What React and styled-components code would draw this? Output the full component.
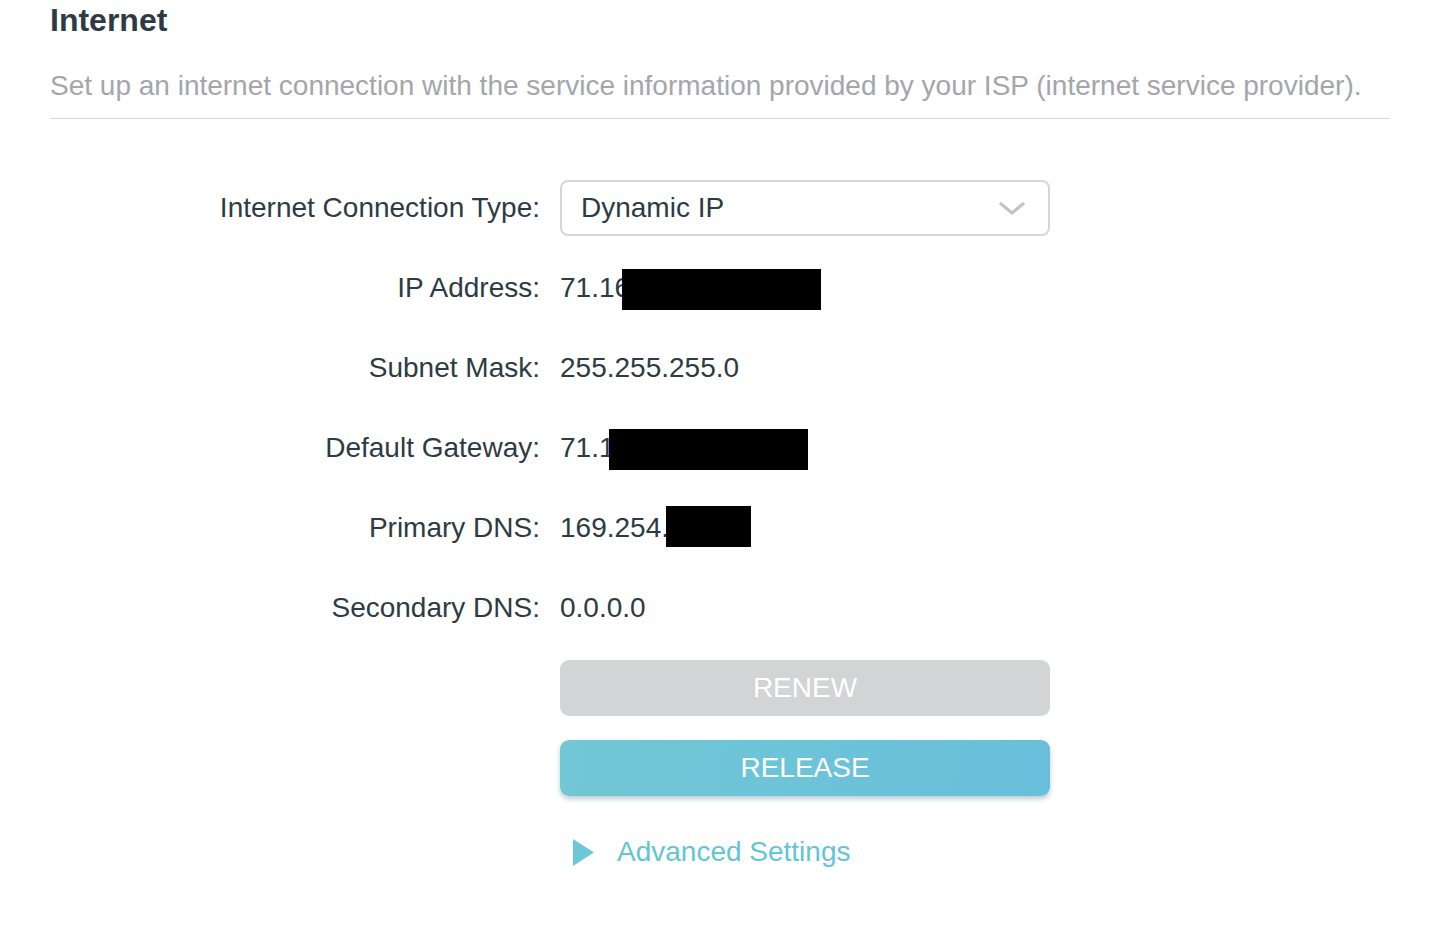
import React from "react";
import styled, { createGlobalStyle } from "styled-components";

const Global = createGlobalStyle`
  html, body { margin: 0; padding: 0; background: #ffffff; }
  body { font-family: "Liberation Sans", Arial, Helvetica, sans-serif; }
`;

const Page = styled.div`
  padding: 0 50px;
  width: 1440px;
  box-sizing: border-box;
`;

const Title = styled.h1`
  margin: 0;
  font-size: 32px;
  line-height: 40px;
  font-weight: 700;
  color: #2e3b43;
`;

const Desc = styled.p`
  margin: 25px 0 0;
  padding-bottom: 11px;
  font-size: 28px;
  line-height: 42px;
  color: #a3a6aa;
  border-bottom: 1px solid #d9d9d9;
`;

const Form = styled.div`
  margin-top: 49px;
  display: grid;
  grid-template-columns: 490px 490px;
  column-gap: 20px;
  grid-auto-rows: 80px;
`;

const Label = styled.div`
  display: flex;
  align-items: center;
  justify-content: flex-end;
  font-size: 28px;
  color: #2e3b43;
  white-space: nowrap;
`;

const Value = styled.div`
  display: flex;
  align-items: center;
  font-size: 28px;
  color: #2e3b43;
`;

const Redact = styled.span`
  display: inline-block;
  background: #000;
  height: ${(p) => p.$h}px;
  width: ${(p) => p.$w}px;
  margin-left: ${(p) => p.$ml}px;
  margin-top: ${(p) => p.$mt || 0}px;
`;

const Select = styled.div`
  box-sizing: border-box;
  width: 490px;
  height: 56px;
  margin-top: -1px;
  border: 2px solid #d6d6d6;
  border-radius: 8px;
  display: flex;
  align-items: center;
  justify-content: space-between;
  padding: 0 22px 0 19px;
  font-size: 28px;
  color: #2e3b43;
`;

const Actions = styled.div`
  margin-left: 510px;
  margin-top: 12px;
  display: flex;
  flex-direction: column;
  gap: 24px;
  width: 490px;
`;

const Button = styled.button`
  width: 490px;
  height: 56px;
  border: none;
  border-radius: 9px;
  font-family: "Liberation Sans", Arial, sans-serif;
  font-size: 28px;
  color: #ffffff;
  padding: 0;
  background: ${(p) =>
    p.$primary ? "linear-gradient(100deg, #72c7d5 0%, #68bfdb 100%)" : "#d3d4d6"};
  box-shadow: ${(p) => (p.$primary ? "0 3px 5px rgba(60, 110, 130, 0.35)" : "none")};
`;

const Advanced = styled.div`
  margin: 16px 0 0 13px;
  display: flex;
  align-items: center;
  gap: 23px;
  font-size: 28px;
  color: #63c5d6;
`;

const Chevron = () => (
  <svg width="28" height="16" viewBox="0 0 28 16">
    <path d="M2 3 L14 13 L26 3" fill="none" stroke="#c4c4c4" strokeWidth="3.2" />
  </svg>
);

const Triangle = () => (
  <svg width="21" height="27" viewBox="0 0 21 27">
    <path d="M0 0 L21 13.5 L0 27 Z" fill="#6cc7d6" />
  </svg>
);

export default function App() {
  return (
    <Page>
      <Global />
      <Title>Internet</Title>
      <Desc>
        Set up an internet connection with the service information provided by your ISP (internet service provider).
      </Desc>
      <Form>
        <Label>Internet Connection Type:</Label>
        <Value>
          <Select>
            <span>Dynamic IP</span>
            <Chevron />
          </Select>
        </Value>
        <Label>IP Address:</Label>
        <Value>
          71.16<Redact $w={199} $h={41} $ml={-8} $mt={2} />
        </Value>
        <Label>Subnet Mask:</Label>
        <Value>255.255.255.0</Value>
        <Label>Default Gateway:</Label>
        <Value>
          71.1<Redact $w={199} $h={41} $ml={-6} $mt={2} />
        </Value>
        <Label>Primary DNS:</Label>
        <Value>
          169.254.<Redact $w={85} $h={41} $ml={-3} $mt={-4} />
        </Value>
        <Label>Secondary DNS:</Label>
        <Value>0.0.0.0</Value>
      </Form>
      <Actions>
        <Button>RENEW</Button>
        <Button $primary>RELEASE</Button>
        <Advanced>
          <Triangle />
          <span>Advanced Settings</span>
        </Advanced>
      </Actions>
    </Page>
  );
}
